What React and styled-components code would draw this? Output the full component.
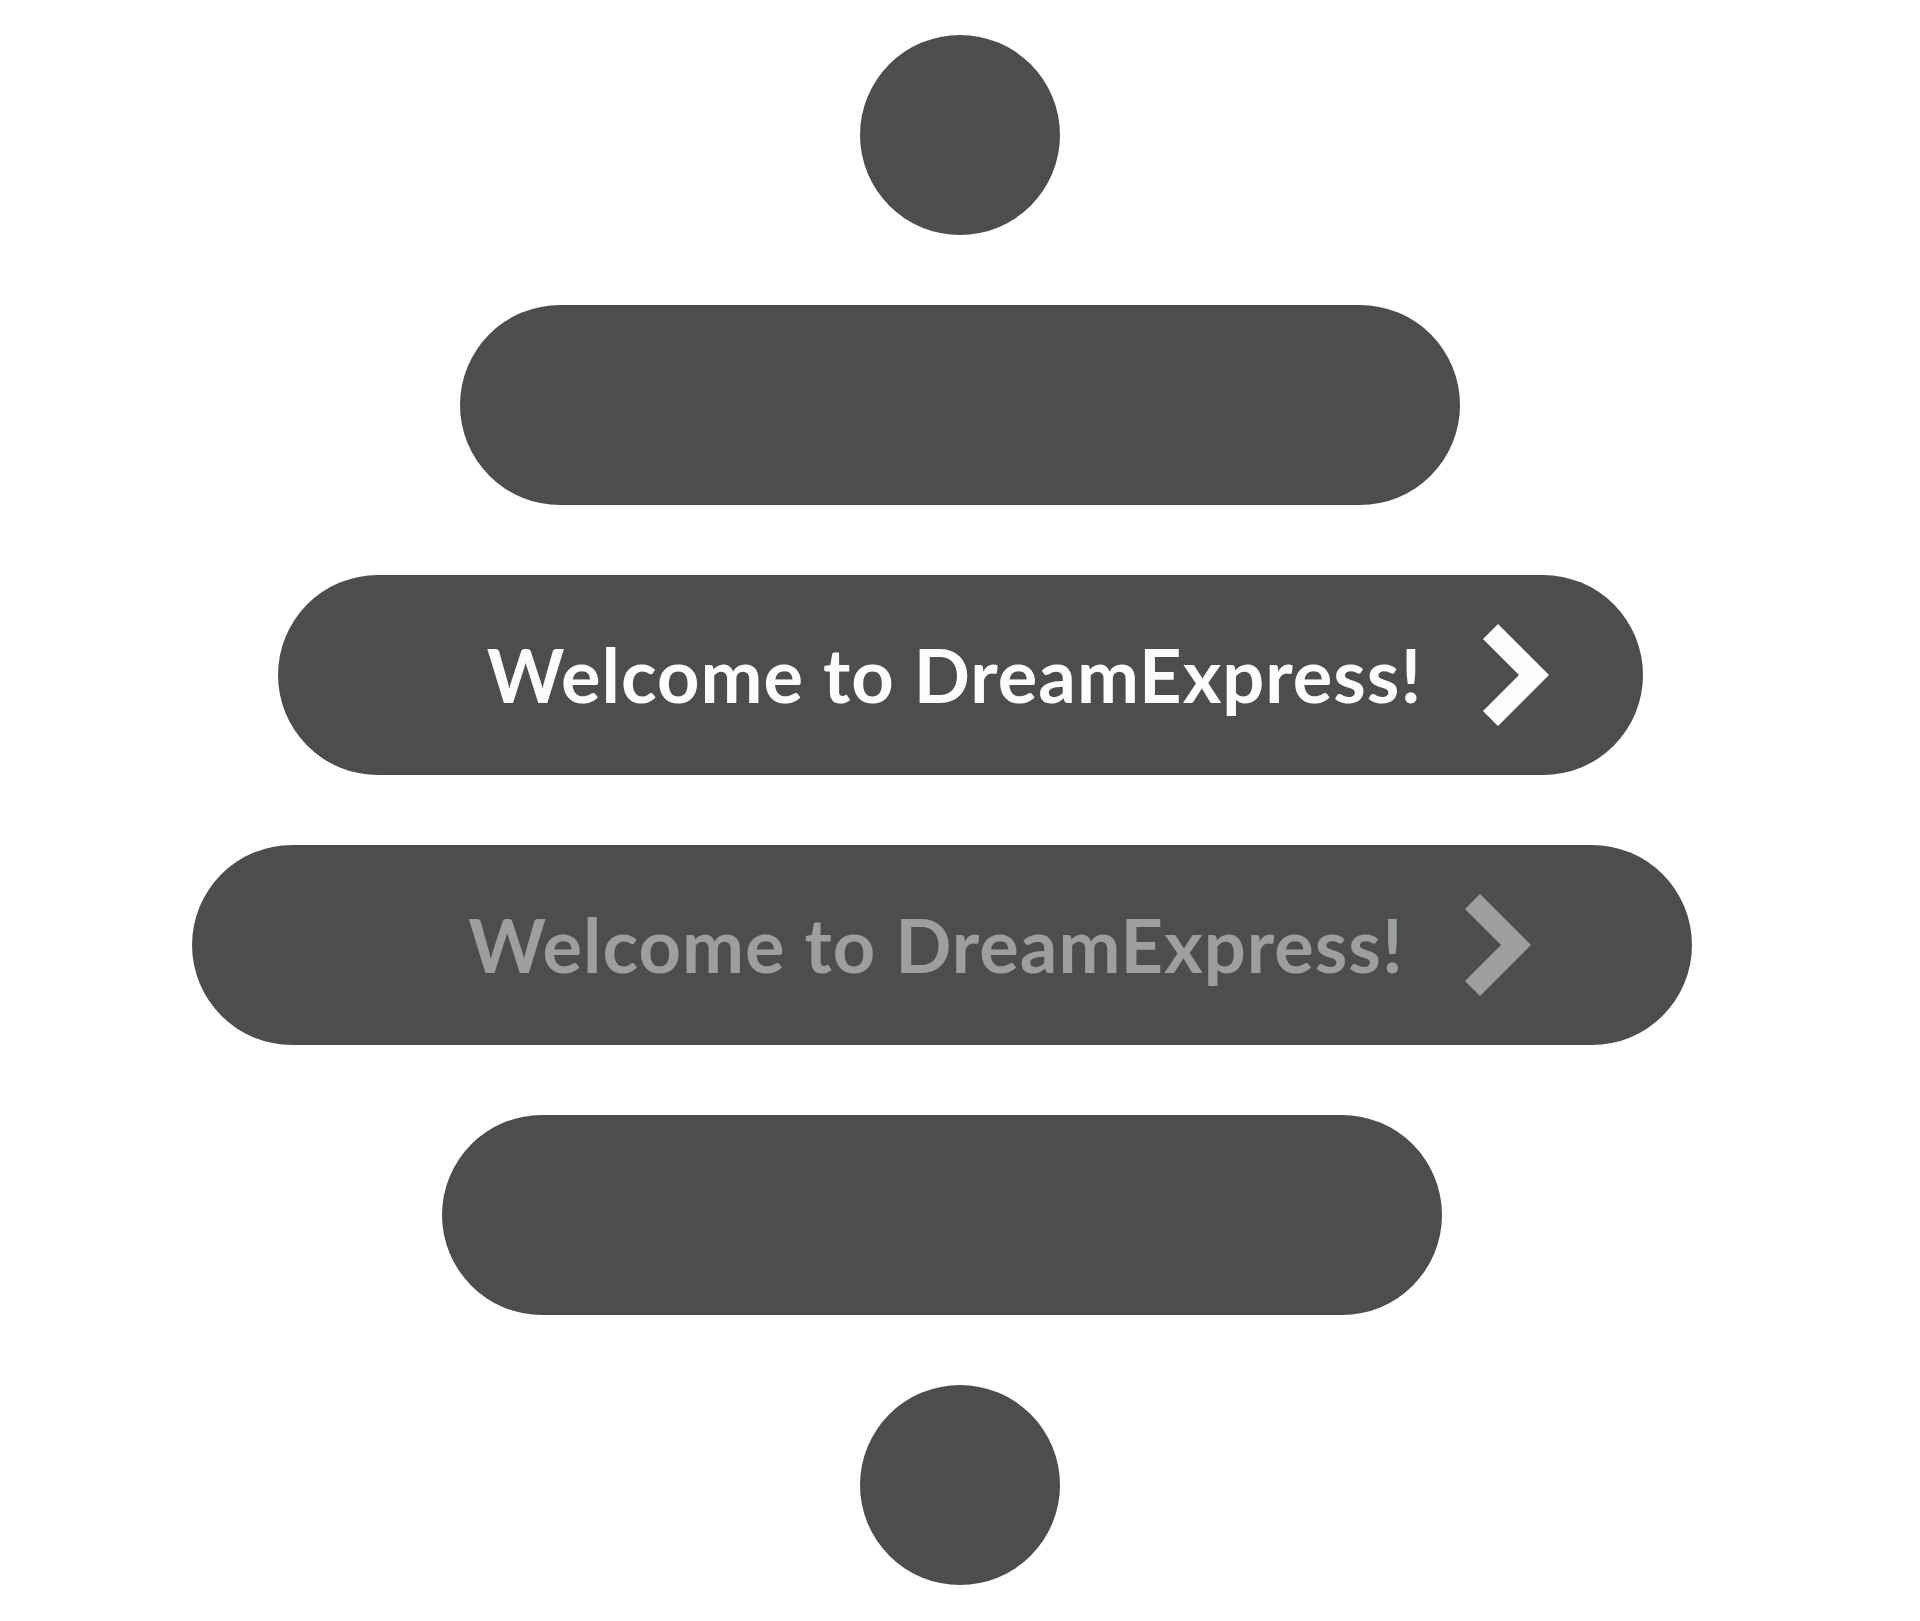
import React from 'react';
import styled, { createGlobalStyle } from 'styled-components';

const GlobalStyle = createGlobalStyle`
    html, body {
        margin: 0;
        padding: 0;
        background: #ffffff;
    }
`;

const Stack = styled.div`
    display: flex;
    flex-direction: column;
    align-items: center;
    gap: 70px;
    padding-top: 35px;
    width: 1920px;
    height: 1621px;
    box-sizing: border-box;
`;

const Dot = styled.div`
    width: 200px;
    height: 200px;
    border-radius: 50%;
    background: #4c4d4f;
    flex-shrink: 0;
`;

const Pill = styled.div`
    width: ${(p) => p.$width}px;
    height: 200px;
    border-radius: 100px;
    background: #4c4d4f;
    flex-shrink: 0;
    margin-right: ${(p) => p.$shift || 0}px;
    display: flex;
    align-items: center;
    justify-content: center;
    padding-left: 116px;
    box-sizing: border-box;
    gap: 61px;
    color: ${(p) => (p.$muted ? '#9c9ea0' : '#fbfcfc')};
`;

const Label = styled.span`
    font-family: Lato, 'Liberation Sans', sans-serif;
    font-weight: 700;
    font-size: 74px;
    letter-spacing: 1px;
    line-height: 1;
    white-space: nowrap;
`;

const Chevron = () => (
    <svg width='66' height='102' viewBox='0 0 66 102'>
        <polygon points='15,0 66,51 15,102 0,87 36,51 0,15' fill='currentColor' />
    </svg>
);

const App = () => {
    return (
        <>
            <GlobalStyle />
            <Stack>
                <Dot />
                <Pill $width={1000} />
                <Pill $width={1365}>
                    <Label>Welcome to DreamExpress!</Label>
                    <Chevron />
                </Pill>
                <Pill $width={1500} $shift={37} $muted>
                    <Label>Welcome to DreamExpress!</Label>
                    <Chevron />
                </Pill>
                <Pill $width={1000} $shift={37} />
                <Dot />
            </Stack>
        </>
    );
};

export default App;
